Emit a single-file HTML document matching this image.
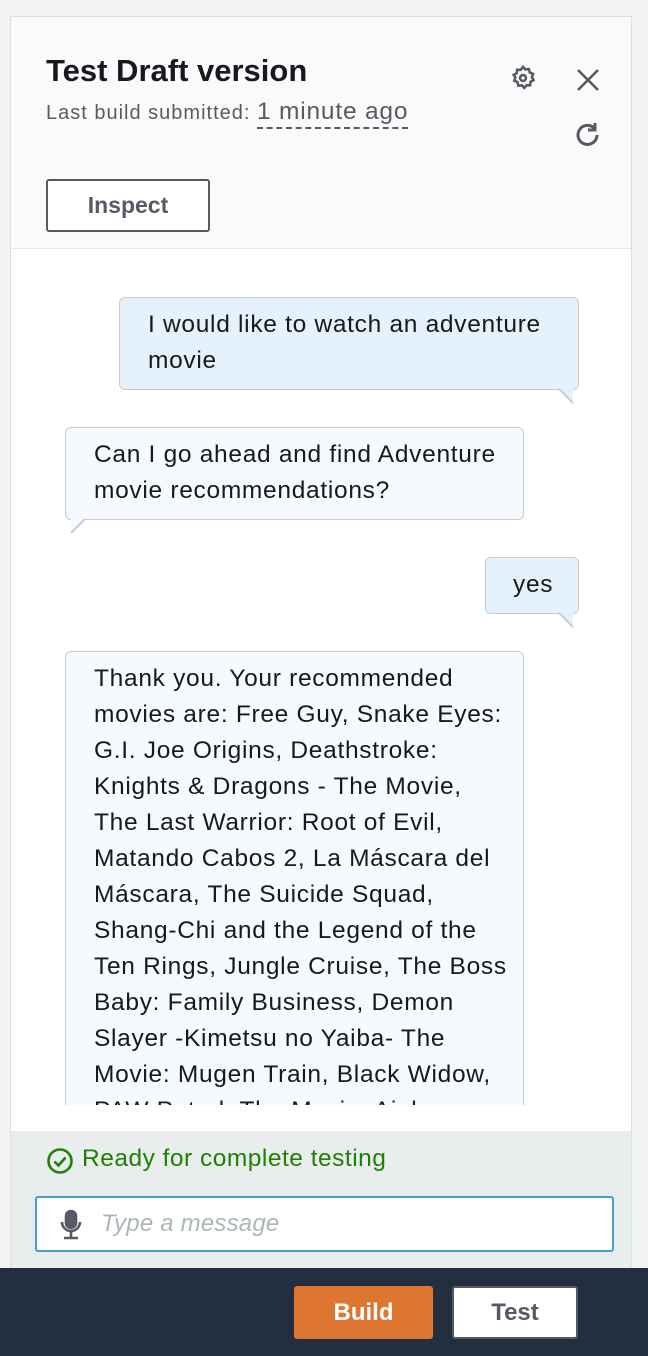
<!DOCTYPE html>
<html><head><style>
*{margin:0;padding:0;box-sizing:border-box}
body{width:648px;height:1356px;background:#f2f3f3;font-family:"Liberation Sans",sans-serif;position:relative;overflow:hidden;color:#16191f}
.panel{position:absolute;left:10px;top:16px;width:622px;height:1252px;background:#fff;border:1px solid #dcdedf}
.hdr{position:absolute;left:0;top:0;width:620px;height:232px;background:#fafafa;border-bottom:1px solid #e6e8e8}
.abs{position:absolute}
.b{position:absolute;border:1px solid #c9cccf;border-radius:6px;font-size:24.5px;line-height:36px;padding:9px 0 0 28px;white-space:nowrap;letter-spacing:0.7px}
.u{background:#e5f2fc}
.bot{background:#f6fafe}
</style></head><body>
<div class="panel">
<div class="hdr">
<div class="abs" style="left:35px;top:36px;font-size:31px;font-weight:bold;letter-spacing:0px">Test Draft version</div>
<div class="abs" style="left:35px;top:81px;font-size:20px;color:#545b64;letter-spacing:1px">Last build submitted: <span style="font-size:24.5px;border-bottom:2px dashed #545b64;padding-bottom:2px;letter-spacing:0.8px">1 minute ago</span></div>
<svg class="abs" style="left:498px;top:47px" width="28" height="28" viewBox="0 0 24 24" fill="none" stroke="#545b64" stroke-width="2.2"><path d="M12 2.5l2 2.2 3-.4.8 2.9 2.8 1.2-1 2.8 1.4 2.6-2.6 1.5-.3 3-3-.1-2 2.3-2.1-2.2-3 .3-.7-3-2.8-1.3 1-2.8L4 9.4l2.6-1.5.4-3 3 .2z"/><circle cx="12" cy="12" r="2.5"/></svg>
<svg class="abs" style="left:564px;top:50px" width="26" height="26" viewBox="0 0 26 26" stroke="#545b64" stroke-width="2.6"><path d="M3 3l20 20M23 3L3 23"/></svg>
<svg class="abs" style="left:562px;top:103px" width="30" height="30" viewBox="0 0 30 30" fill="none" stroke="#545b64" stroke-width="3"><path d="M24 15a9.5 9.5 0 1 1-3-7"/><path d="M22 3v7h-7" stroke-linejoin="miter"/></svg>
<div class="abs" style="left:35px;top:162px;width:164px;height:53px;border:2px solid #545b64;border-radius:3px;background:#fff;font-size:23px;font-weight:bold;color:#545b64;text-align:center;line-height:49px">Inspect</div>
</div>

<div class="b u" style="left:108px;top:280px;width:460px;height:93px">I would like to watch an adventure<br>movie</div>
<svg class="abs" style="left:548px;top:371px" width="20" height="16"><path d="M0 1L14 1L14 15Z" fill="#e5f2fc"/><path d="M0 1L14 15" stroke="#c9cccf" stroke-width="2"/></svg>
<div class="b bot" style="left:54px;top:410px;width:459px;height:93px">Can I go ahead and find Adventure<br>movie recommendations?</div>
<svg class="abs" style="left:58px;top:501px" width="20" height="16"><path d="M2 1L16 1L2 15Z" fill="#f6fafe"/><path d="M16 1L2 15" stroke="#c9cccf" stroke-width="2"/></svg>
<div class="b u" style="left:474px;top:540px;width:94px;height:57px;padding-left:27px">yes</div>
<svg class="abs" style="left:548px;top:595px" width="20" height="16"><path d="M0 1L14 1L14 15Z" fill="#e5f2fc"/><path d="M0 1L14 15" stroke="#c9cccf" stroke-width="2"/></svg>
<div class="b bot" style="left:54px;top:634px;width:459px;height:470px;border-bottom:none;border-radius:6px 6px 0 0;overflow:hidden">Thank you. Your recommended<br>movies are: Free Guy, Snake Eyes:<br>G.I. Joe Origins, Deathstroke:<br>Knights &amp; Dragons - The Movie,<br>The Last Warrior: Root of Evil,<br>Matando Cabos 2, La Máscara del<br>Máscara, The Suicide Squad,<br>Shang-Chi and the Legend of the<br>Ten Rings, Jungle Cruise, The Boss<br>Baby: Family Business, Demon<br>Slayer -Kimetsu no Yaiba- The<br>Movie: Mugen Train, Black Widow,<br>PAW Patrol: The Movie, Ainbo</div>
<div class="abs" style="left:0;top:1088px;width:620px;height:26px;background:#fff"></div>

<div class="abs" style="left:0;top:1114px;width:620px;height:138px;background:#eaeded">
<svg class="abs" style="left:35px;top:16px" width="28" height="28" viewBox="0 0 28 28" fill="none" stroke="#1d8102" stroke-width="2.6"><circle cx="14" cy="14" r="11.5"/><path d="M8.5 14.5l4 4 7-8"/></svg>
<div class="abs" style="left:71px;top:14px;font-size:24.5px;color:#1d8102;letter-spacing:0.5px">Ready for complete testing</div>
<div class="abs" style="left:24px;top:65px;width:579px;height:56px;border:2px solid #44a0c8;border-radius:3px;background:#fff">
<svg class="abs" style="left:22px;top:11px" width="24" height="32" viewBox="0 0 24 32" fill="none" stroke="#545b64" stroke-width="2.6"><rect x="7" y="2" width="10" height="17" rx="5" fill="#545b64"/><path d="M3 13a9 9 0 0 0 18 0M12 22v7M5 29h14"/></svg>
<div class="abs" style="left:64px;top:12px;font-size:24px;font-style:italic;color:#aab7b8;letter-spacing:0.2px">Type a message</div>
</div>
</div>
</div>
<div class="abs" style="left:0;top:1268px;width:648px;height:88px;background:#232f3e">
<div class="abs" style="left:294px;top:18px;width:139px;height:53px;background:#dd7631;border-radius:3px;color:#fff;font-size:24px;font-weight:bold;text-align:center;line-height:53px">Build</div>
<div class="abs" style="left:452px;top:18px;width:126px;height:53px;background:#fff;border:2px solid #545b64;border-radius:3px;color:#545b64;font-size:24px;font-weight:bold;text-align:center;line-height:49px">Test</div>
</div>
</body></html>
